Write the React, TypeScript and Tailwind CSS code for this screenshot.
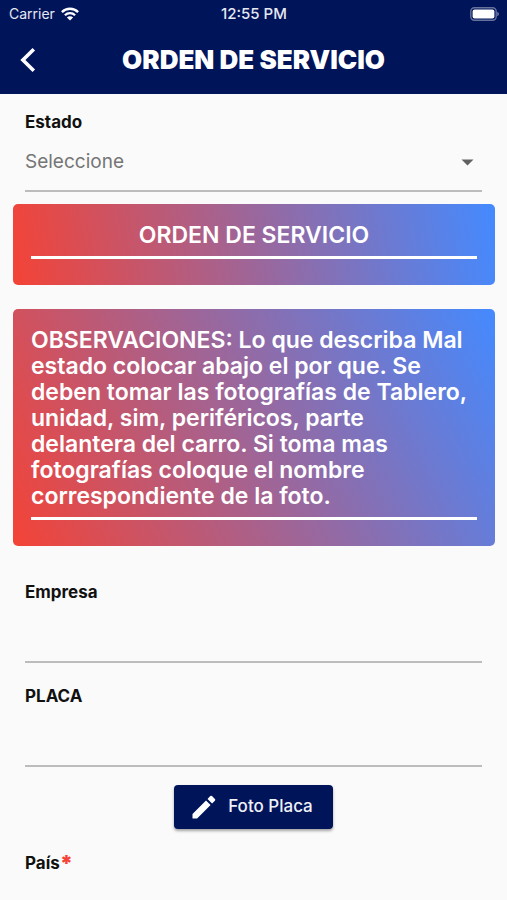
import type { ReactNode } from "react";

function StatusBar() {
  return (
    <div className="grid h-7 grid-cols-3 items-center pr-2 pl-[9px] text-[#e6e8f2]">
      <div className="flex items-center gap-1.5 text-sm">
        <span>Carrier</span>
        <svg width="18" height="14" viewBox="0 0 18 14" aria-hidden="true">
          <g fill="none" stroke="#fff" strokeWidth="2.3">
            <path d="M0.9 5.1a11.5 11.5 0 0 1 16.2 0" />
            <path d="M3.9 8.2a7.2 7.2 0 0 1 10.2 0" />
          </g>
          <path d="M9 13.6 5.9 10.5a4.4 4.4 0 0 1 6.2 0Z" fill="#fff" />
        </svg>
      </div>
      <span className="text-center text-[15px] font-medium whitespace-nowrap">12:55 PM</span>
      <svg className="justify-self-end" width="30" height="14" viewBox="0 0 30 14" aria-hidden="true">
        <rect x="1.8" y="0.8" width="25.4" height="12.4" rx="3.6" fill="none" stroke="#66729c" strokeWidth="1.4" />
        <rect x="3.6" y="2.6" width="21.8" height="8.8" rx="2" fill="#fff" />
        <path d="M28.2 4.8c1.3.5 1.8 1.3 1.8 2.2s-.5 1.7-1.8 2.2Z" fill="#66729c" />
      </svg>
    </div>
  );
}

function Header() {
  return (
    <header className="bg-[#00145a] text-white">
      <StatusBar />
      <div className="grid h-[66px] grid-cols-[56px_1fr_56px] items-start pt-3">
        <button type="button" aria-label="Volver" className="flex h-10 items-center justify-center">
          <svg width="16" height="26" viewBox="0 0 16 26" aria-hidden="true">
            <path d="M13.8 2.2 2.9 13l10.9 10.8" fill="none" stroke="#fff" strokeWidth="3.6" />
          </svg>
        </button>
        <h1 className="text-center text-[26px] leading-10 font-black whitespace-nowrap">ORDEN DE SERVICIO</h1>
      </div>
    </header>
  );
}

function Banner({ className, children }: { className: string; children: ReactNode }) {
  return (
    <section className={`mr-3 ml-[13px] rounded-[5px] px-[18px] pt-[18px] pb-[26px] text-white ${className}`}>
      {children}
    </section>
  );
}

function TextField({ id, label }: { id: string; label: string }) {
  return (
    <div className="flex flex-col">
      <label htmlFor={id} className="text-[17px] leading-6 font-bold">
        {label}
      </label>
      <input id={id} type="text" className="h-[59px] border-b-2 border-[#bcbcbc] bg-transparent text-[19px] outline-none" />
    </div>
  );
}

export default function App() {
  return (
    <div className="min-h-screen bg-[#fafafa] font-['Inter',sans-serif] text-[#111]">
      <Header />
      <main>
        <div className="mx-[25px] flex flex-col pt-4">
          <label htmlFor="estado" className="text-[17px] leading-6 font-bold">
            Estado
          </label>
          <div className="relative">
            <select
              id="estado"
              className="h-[58px] w-full appearance-none border-b-2 border-[#bcbcbc] bg-transparent text-[19px] text-[#757575] outline-none"
            >
              <option>Seleccione</option>
            </select>
            <svg
              className="pointer-events-none absolute top-[25px] right-2"
              width="13"
              height="7"
              viewBox="0 0 13 7"
              aria-hidden="true"
            >
              <path d="M0.5 0.5h12l-6 6Z" fill="#616161" />
            </svg>
          </div>
        </div>

        <Banner className="mt-3 bg-[linear-gradient(80deg,#f44336,#448aff)]">
          <h2 className="border-b-3 border-white pb-2 text-center text-[23px] leading-[26px] font-semibold">
            ORDEN DE SERVICIO
          </h2>
        </Banner>

        <Banner className="mt-6 bg-[linear-gradient(64deg,#f44336,#448aff)]">
          <p className="border-b-3 border-white pb-2 text-[23px] leading-[26px] font-semibold">
            OBSERVACIONES: Lo que describa Mal estado colocar abajo el por que. Se deben tomar las fotografías de
            Tablero, unidad, sim, periféricos, parte
            <br />
            delantera del carro. Si toma mas fotografías coloque el nombre correspondiente de la foto.
          </p>
        </Banner>

        <div className="mx-[25px] mt-[34px] flex flex-col gap-[21px]">
          <TextField id="empresa" label="Empresa" />
          <TextField id="placa" label="PLACA" />
        </div>

        <div className="mt-[18px] flex justify-center">
          <button
            type="button"
            className="flex h-[44px] items-center gap-3 rounded bg-[#00145a] pr-5 pl-[18px] text-[17px] font-medium text-[#f0f1f7] shadow-[0_2px_3px_rgba(0,0,0,0.35)]"
          >
            <svg width="24" height="24" viewBox="0 0 24 24" aria-hidden="true">
              <path
                fill="#fff"
                d="M0.5 18.9V23.5h4.6L18.6 10 14 5.4ZM22.9 5.7a1.2 1.2 0 0 0 0-1.7L20 1.1a1.2 1.2 0 0 0-1.7 0l-2.8 2.8 4.6 4.6Z"
              />
            </svg>
            Foto Placa
          </button>
        </div>

        <p className="mx-[25px] mt-[22px] text-[17px] leading-6 font-bold">
          País<span className="align-top text-[22px] font-black text-[#f44336]">*</span>
        </p>
      </main>
    </div>
  );
}
